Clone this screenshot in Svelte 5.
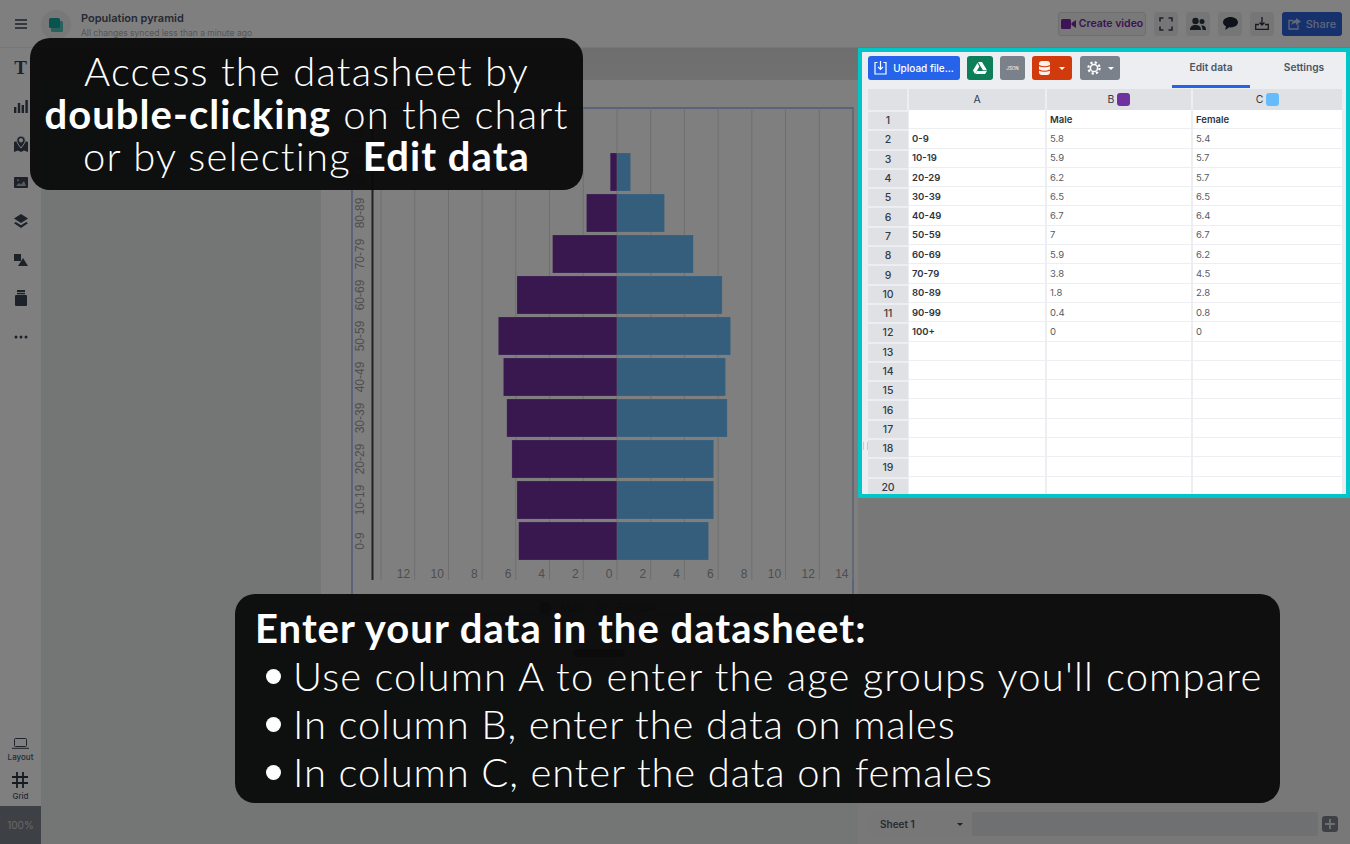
<script lang="ts">
  const ages = ['0-9', '10-19', '20-29', '30-39', '40-49', '50-59', '60-69', '70-79', '80-89', '90-99', '100+'];
  const male = [5.8, 5.9, 6.2, 6.5, 6.7, 7, 5.9, 3.8, 1.8, 0.4, 0];
  const female = [5.4, 5.7, 5.7, 6.5, 6.4, 6.7, 6.2, 4.5, 2.8, 0.8, 0];

  const rows = $derived.by(() => {
    const out: { a: string; b: string; c: string; head?: boolean }[] = [{ a: '', b: 'Male', c: 'Female', head: true }];
    ages.forEach((a, i) => out.push({ a, b: String(male[i]), c: String(female[i]) }));
    while (out.length < 20) out.push({ a: '', b: '', c: '' });
    return out;
  });

  const zero = 617;
  const unit = 16.95;
  const step = 33.72;
  const leftTicks = [0, 2, 4, 6, 8, 10, 12];
  const rightTicks = [2, 4, 6, 8, 10, 12, 14];
  const barY = (i: number) => 522 - i * 41;
</script>

<div class="app">
  <header class="topbar">
    <button class="ham" aria-label="Menu">
      <svg width="12" height="10" viewBox="0 0 12 10"><path d="M0 1h12M0 5h12M0 9h12" stroke="#3b4352" stroke-width="1.700" /></svg>
    </button>
    <div class="logo">
      <svg width="16" height="16" viewBox="0 0 16 16"><rect x="3" y="4" width="12" height="11" rx="1.5" fill="#4fc4bb" /><rect x="1" y="1" width="11" height="10" rx="1.5" fill="#12a89d" /></svg>
    </div>
    <div class="doc">
      <div class="doc-title">Population pyramid</div>
      <div class="doc-sub">All changes synced less than a minute ago</div>
    </div>
    <div class="top-actions">
      <button class="video">
        <svg width="15" height="10" viewBox="0 0 15 10"><rect width="10" height="10" rx="1.5" fill="#7a2aa8" /><path d="M10.5 4 15 1v8l-4.5-3z" fill="#7a2aa8" /></svg>
        Create video
      </button>
      <button class="square" aria-label="Fullscreen">
        <svg width="14" height="14" viewBox="0 0 14 14" fill="none" stroke="#3b4352" stroke-width="1.6"><path d="M1 4.500V1h3.500M9.500 1H13v3.500M13 9.500V13H9.500M4.500 13H1V9.500" /></svg>
      </button>
      <button class="square" aria-label="Team">
        <svg width="16" height="14" viewBox="0 0 16 14" fill="#2b3240"><circle cx="5.500" cy="4" r="3.200" /><path d="M0 13c0-3.500 2-5 5.500-5s5.500 1.500 5.500 5z" /><circle cx="12" cy="4.500" r="2.500" /><path d="M12 8.500c2.500 0 4 1 4 4.500h-3.500c0-2-.5-3.200-1.500-4.300z" /></svg>
      </button>
      <button class="square" aria-label="Comments">
        <svg width="15" height="13" viewBox="0 0 15 13" fill="#1f2633"><path d="M7.500 0C3.400 0 0 2.300 0 5.200c0 1.700 1.100 3.200 2.900 4.100L2.300 13l3.900-2.700c.4.100.9.100 1.300.1 4.100 0 7.500-2.300 7.500-5.200S11.600 0 7.500 0z" /></svg>
      </button>
      <button class="square" aria-label="Download">
        <svg width="14" height="13" viewBox="0 0 14 13" fill="none" stroke="#2b3240" stroke-width="1.300"><path d="M7 0v8M4.500 5.500 7 8l2.500-2.500M4 7.500H.7v4.800h12.600V7.500H10" /></svg>
      </button>
      <button class="share">
        <svg width="14" height="13" viewBox="0 0 14 13" fill="none" stroke="#bcd0f5" stroke-width="1.300"><path d="M10 7.500V12H1V3.500h4" /><path d="M8 1l5 3.500L8 8V6C5.500 6 4 7 3.500 8.500 3.500 5 5 3 8 3z" fill="#bcd0f5" stroke="none" /></svg>
        Share
      </button>
    </div>
  </header>

  <div class="body">
    <nav class="rail">
      <div class="tool"><span class="t-glyph">T</span></div>
      <div class="tool"><svg width="14" height="14" viewBox="0 0 14 14" fill="#3b4352"><rect y="8" width="2.400" height="6" /><rect x="3.800" y="4" width="2.400" height="10" /><rect x="7.600" y="6" width="2.400" height="8" /><rect x="11.400" y="1" width="2.400" height="13" /></svg></div>
      <div class="tool"><svg width="14" height="16" viewBox="0 0 14 16" fill="#3b4352"><path d="M0 6l3-1 4 6 4-6 3 1v10l-4-1.500L7 16l-3-1.500L0 16z" /><path fill-rule="evenodd" stroke="#fff" stroke-width="1" d="M7 0a4.300 4.300 0 0 0-4.300 4.300C2.700 6.500 5 9.500 7 12c2-2.500 4.300-5.500 4.300-7.700A4.300 4.300 0 0 0 7 0zm0 2.600a1.700 1.700 0 1 1 0 3.400 1.700 1.700 0 0 1 0-3.400z" /></svg></div>
      <div class="tool"><svg width="14" height="11" viewBox="0 0 14 11"><rect width="14" height="11" rx="1" fill="#3b4352" /><path d="M2 9l3-3 2 1.500L10 4l2 5z" fill="#b5b5b5" /><circle cx="4" cy="3.200" r="1" fill="#b5b5b5" /></svg></div>
      <div class="tool"><svg width="14" height="14" viewBox="0 0 14 14" fill="#3b4352"><path d="M7 0l7 4.500L7 9 0 4.500z" /><path d="M1.800 8L7 11.300 12.200 8 14 9.300 7 14 0 9.300z" /></svg></div>
      <div class="tool"><svg width="14" height="12" viewBox="0 0 14 12" fill="#3b4352"><rect width="7" height="7" /><path d="M9 4l5 8H4z" /></svg></div>
      <div class="tool"><svg width="12" height="16" viewBox="0 0 12 16" fill="#3b4352"><rect x="2" width="8" height="2" /><rect x="2" y="2.800" width="8" height="1.500" /><rect y="5" width="12" height="11" rx="1" /></svg></div>
      <div class="tool"><svg width="14" height="4" viewBox="0 0 14 4" fill="#3b4352"><circle cx="2" cy="2" r="1.500" /><circle cx="7" cy="2" r="1.500" /><circle cx="12" cy="2" r="1.500" /></svg></div>
      <div class="rail-foot">
        <div class="mini">
          <svg width="17" height="11" viewBox="0 0 17 11" fill="none" stroke="#3b4352" stroke-width="1"><rect x="2.500" y=".5" width="12" height="8" rx="1" /><path d="M0 10.300h17" /></svg>
          <span>Layout</span>
        </div>
        <div class="mini">
          <svg width="16" height="16" viewBox="0 0 16 16" fill="none" stroke="#2b3240" stroke-width="1.800"><path d="M5 0v16M11 0v16M0 5h16M0 11h16" /></svg>
          <span>Grid</span>
        </div>
        <div class="zoom-box">100%</div>
      </div>
    </nav>

    <main class="canvas">
      <div class="canvas-bar"></div>
      <div class="canvas-row">
        <div class="gutter"></div>
        <div class="page">
          <svg class="chart" width="537" height="590" viewBox="321 80 537 590">
            <rect x="352" y="108" width="501" height="507" fill="none" stroke="#6a90f0" stroke-width="1" />
            {#each [...leftTicks, 14] as t}
              <line x1={zero - (t * step) / 2} x2={zero - (t * step) / 2} y1="108" y2="580" stroke="#dcdcdc" stroke-width="1" />
            {/each}
            {#each rightTicks as t}
              <line x1={zero + (t * step) / 2} x2={zero + (t * step) / 2} y1="108" y2="580" stroke="#dcdcdc" stroke-width="1" />
            {/each}
            <line x1="372.500" x2="372.500" y1="108" y2="580" stroke="#444" stroke-width="2" />
            {#each ages as age, i}
              <rect x={zero - male[i] * unit} y={barY(i)} width={male[i] * unit} height="38" fill="#70309f" stroke="#fff" stroke-opacity=".35" stroke-width=".6" />
              <rect x={zero} y={barY(i)} width={female[i] * unit} height="38" fill="#68bcf8" stroke="#fff" stroke-opacity=".35" stroke-width=".6" />
              <text class="tick" transform="translate(364 {barY(i) + 19}) rotate(-90)" text-anchor="middle">{age}</text>
            {/each}
            {#each leftTicks as t}
              <text class="tick" x={zero - (t * step) / 2 - 4.500} y="578" text-anchor="end">{t}</text>
            {/each}
            {#each rightTicks as t}
              <text class="tick" x={zero + (t * step) / 2 - 4.500} y="578" text-anchor="end">{t}</text>
            {/each}
            <circle cx="545" cy="608" r="6" fill="#70309f" />
            <text class="legend" x="560" y="612">Male</text>
            <circle cx="601" cy="608" r="6" fill="#68bcf8" />
            <text class="legend" x="616" y="612">Female</text>
            <rect x="573" y="649" width="52" height="8" rx="4" fill="#333" />
          </svg>
        </div>
      </div>
    </main>

    <aside class="side">
      <section class="sheet">
        <div class="grip" aria-hidden="true"></div>
        <div class="toolbar">
          <button class="tb upload">
            <svg width="13" height="14" viewBox="0 0 13 14" fill="none" stroke="#fff" stroke-width="1.200"><path d="M3.500 1.500H1v11.500h11V1.500H9.500M6.500 0v8M4 5.800l2.500 2.500L9 5.800" /></svg>
            Upload file...
          </button>
          <button class="tb drive" aria-label="Google Drive">
            <svg width="14" height="12" viewBox="0 0 14 12" fill="#fff"><path d="M5 0h4l5 8.300h-4zM4.400 1 6.400 4.500 2 12 0 8.500zM4 9h10l-2 3H2.500z" /></svg>
          </button>
          <button class="tb json">JSON</button>
          <button class="tb db">
            <svg width="11" height="14" viewBox="0 0 11 14"><rect width="11" height="14" rx="3" fill="#fff0ea" /><path d="M0 4.500c3 1.500 8 1.500 11 0M0 9c3 1.500 8 1.500 11 0" stroke="#d13a0d" stroke-width="1.200" fill="none" /></svg>
            <i class="caret"></i>
          </button>
          <button class="tb gear" aria-label="Options">
            <svg width="14" height="14" viewBox="0 0 14 14" fill="none" stroke="#fff"><circle cx="7" cy="7" r="3.600" stroke-width="1.500" /><circle cx="7" cy="7" r="5.600" stroke-width="2.200" stroke-dasharray="2.200 2.200" /></svg>
            <i class="caret"></i>
          </button>
          <div class="tabs">
            <div class="tab on">Edit data</div>
            <div class="tab">Settings</div>
          </div>
        </div>

        <div class="grid">
          <div class="hd"></div>
          <div class="hd">A</div>
          <div class="hd">B <i class="swatch purple"></i></div>
          <div class="hd">C <i class="swatch blue"></i></div>
          {#each rows as r, i}
            <div class="num">{i + 1}</div>
            <div class="cell age">{r.a}</div>
            <div class="cell" class:bold={r.head}>{r.b}</div>
            <div class="cell" class:bold={r.head}>{r.c}</div>
          {/each}
        </div>
      </section>

      <div class="sheet-tabs">
        <div class="sheet-bar">
          <div class="sheet-name">Sheet 1 <i class="caret dark"></i></div>
        </div>
        <button class="add" aria-label="Add sheet">
          <svg width="10" height="10" viewBox="0 0 10 10"><path d="M5 0v10M0 5h10" stroke="#ddd" stroke-width="2" /></svg>
        </button>
      </div>
    </aside>
  </div>

  <div class="overlay"></div>

  <div class="note note-top">
    Access the datasheet by<br />
    <strong>double-clicking</strong> on the chart<br />
    or by selecting <strong>Edit data</strong>
  </div>

  <div class="note note-bottom">
    <strong class="note-title">Enter your data in the datasheet:</strong>
    <ul>
      <li>Use column A to enter the age groups you'll compare</li>
      <li>In column B, enter the data on males</li>
      <li>In column C, enter the data on females</li>
    </ul>
  </div>
</div>

<style>
  :global(body) { margin: 0; overflow: hidden; font-family: Inter, "Noto Sans", sans-serif; }
  button { font-family: inherit; border: 0; padding: 0; cursor: pointer; }

  .app { position: relative; width: 1350px; height: 844px; display: flex; flex-direction: column; overflow: hidden; background: #fff; }

  .topbar { height: 48px; flex: none; display: flex; align-items: center; background: #fff; border-bottom: 1px solid #eee; box-sizing: border-box; }
  .ham { width: 41px; height: 40px; background: none; display: flex; align-items: center; justify-content: center; }
  .logo { width: 30px; height: 30px; margin: 3px 10px 0 0; border-radius: 50%; background: #f0f0f0; display: flex; align-items: center; justify-content: center; }
  .doc { margin-top: 3px; }
  .doc-title { font-size: 11px; font-weight: 600; color: #4b5568; line-height: 14px; }
  .doc-sub { font-size: 8.500px; color: #a9adb3; line-height: 14px; margin-top: 1px; }
  .top-actions { margin-left: auto; margin-right: 8px; display: flex; gap: 8px; align-items: center; }
  .video { height: 24px; width: 88px; border: 1px solid #ddd; border-radius: 3px; background: #f2f2f2; color: #7a2aa8; font-size: 10.500px; font-weight: 600; display: flex; align-items: center; justify-content: center; gap: 3px; box-sizing: border-box; white-space: nowrap; }
  .square { width: 24px; height: 24px; background: #ececec; border-radius: 3px; display: flex; align-items: center; justify-content: center; }
  .share { width: 60px; height: 24px; background: #2f62d8; color: #bcd0f5; border-radius: 3px; font-size: 11px; font-weight: 500; display: flex; align-items: center; justify-content: center; gap: 4px; }

  .body { flex: 1; display: flex; min-height: 0; }

  .rail { width: 41px; flex: none; background: #fff; display: flex; flex-direction: column; align-items: center; }
  .tool { height: 38.500px; width: 100%; display: flex; align-items: center; justify-content: center; flex: none; }
  .t-glyph { font-family: "Liberation Serif", serif; font-weight: 700; font-size: 19px; color: #3b4352; line-height: 1; }
  .rail-foot { margin-top: auto; width: 100%; display: flex; flex-direction: column; align-items: center; }
  .mini { height: 39px; display: flex; flex-direction: column; align-items: center; justify-content: flex-end; color: #4b5568; font-size: 8px; font-weight: 500; gap: 3px; padding-bottom: 2px; box-sizing: border-box; }
  .zoom-box { width: 100%; height: 38px; margin-top: 3px; background: #7b818b; color: #d2d2d2; font-size: 10px; display: flex; align-items: center; justify-content: center; }

  .canvas { flex: 1; min-width: 0; background: #e9eaeb; display: flex; flex-direction: column; }
  .canvas-bar { height: 32px; flex: none; background: linear-gradient(#dcdddc, #e2e2e2); }
  .canvas-row { display: flex; }
  .gutter { width: 280px; flex: none; }
  .page { flex: 1; background: #fff; height: 590px; }
  .chart { display: block; }
  .tick { font-family: "Liberation Sans", sans-serif; font-size: 12px; fill: #9c9c9c; }
  .legend { font-family: "Liberation Sans", sans-serif; font-size: 12px; fill: #666; }

  .side { width: 492px; flex: none; background: #f0f0f1; display: flex; flex-direction: column; }
  .sheet { position: relative; z-index: 3; height: 450px; box-sizing: border-box; border: 4px solid #00c7c7; background: #eceef1; padding: 4px 4px 0 6px; overflow: hidden; }
  .grip { position: absolute; left: 1px; top: 390px; width: 3px; height: 8px; border: solid #c4c7cc; border-width: 0 1px; }

  .toolbar { display: flex; align-items: flex-start; height: 33px; }
  .tb { height: 24px; border-radius: 3px; display: flex; align-items: center; justify-content: center; color: #fff; flex: none; }
  .upload { width: 92px; background: #2563eb; font-size: 10px; font-weight: 500; gap: 6px; white-space: nowrap; }
  .drive { width: 26px; margin-left: 7px; background: #0d7f58; }
  .json { width: 25px; margin-left: 7px; background: #7b818b; font-size: 4.500px; }
  .db { width: 40px; margin-left: 7px; background: #d13a0d; gap: 9px; }
  .gear { width: 40px; margin-left: 8px; background: #7b818b; gap: 7px; }
  .caret { width: 0; height: 0; border: solid transparent; border-width: 3px 3px 0; border-top-color: #fff; }
  .caret.dark { border-top-color: #444; }

  .tabs { margin-left: auto; display: flex; }
  .tab { width: 78px; height: 32px; box-sizing: border-box; padding-top: 3px; margin-right: 15px; font-size: 10.200px; font-weight: 600; line-height: 16px; text-align: center; color: #4b5563; }
  .tab:last-child { margin-right: -1px; }
  .tab.on { border-bottom: 3.500px solid #2563eb; }

  .grid { display: grid; grid-template-columns: 41px 138px 146px 149px; grid-template-rows: 21px; grid-auto-rows: 19.300px; width: 474px; }
  .hd { background: #dfe1e5; border-right: 2px solid #eceef1; box-sizing: border-box; font-size: 10.500px; color: #333a45; display: flex; align-items: center; justify-content: center; gap: 3px; }
  .hd:nth-child(4) { border-right: 0; }
  .num { background: #dfe1e5; border: solid #eceef1; border-width: 2px 1px 0 0; box-sizing: border-box; font-size: 10.500px; font-weight: 500; color: #333a45; display: flex; align-items: center; justify-content: center; }
  .cell { background: #fff; border: solid #eceef1; border-width: 0 2px 1.500px 0; box-sizing: border-box; padding-left: 3px; font-size: 9.500px; color: #555b68; display: flex; align-items: center; white-space: nowrap; }
  .cell:nth-child(4n + 4) { border-right: 0; }
  .age, .bold { font-weight: 600; color: #2e3440; }
  .swatch { width: 13px; height: 13px; border-radius: 3px; display: inline-block; }
  .purple { background: #7030a0; }
  .blue { background: #66bbfb; }

  .sheet-tabs { margin-top: auto; margin-bottom: 8px; display: flex; padding-left: 10px; height: 24px; align-items: center; }
  .sheet-bar { width: 450px; height: 24px; background: #dfe0e2; border-radius: 2px; }
  .sheet-name { width: 104px; height: 24px; box-sizing: border-box; padding: 0 9px 0 12px; background: #eeeeef; display: flex; align-items: center; justify-content: space-between; font-size: 10px; font-weight: 600; color: #4b5563; }
  .add { width: 16px; height: 16px; margin-left: 4px; background: #7b818b; border-radius: 3px; display: flex; align-items: center; justify-content: center; }

  .overlay { position: absolute; inset: 0; z-index: 2; background: rgba(0, 0, 0, 0.5); }

  .note { position: absolute; z-index: 4; box-sizing: border-box; background: rgba(10, 10, 10, 0.96); border-radius: 20px; color: #fff; font-family: Lato, "Open Sans", sans-serif; font-weight: 300; font-size: 40px; white-space: nowrap; }
  .note strong { font-weight: 700; }
  .note-top { left: 30px; top: 38px; width: 553px; height: 152px; text-align: center; line-height: 42.500px; padding-top: 12px; letter-spacing: 1.220px; }
  .note-top strong { letter-spacing: 1.050px; }
  .note-bottom { left: 235px; top: 594px; width: 1045px; height: 209px; padding: 10px 0 0 20px; letter-spacing: 1.170px; }
  .note-title { display: block; line-height: 48px; letter-spacing: 1.020px; }
  ul { margin: 0; padding: 0 0 0 38px; list-style: none; }
  li { position: relative; line-height: 48px; }
  li:nth-child(n + 2) { letter-spacing: 0.860px; }
  li::before { content: ""; position: absolute; left: -27px; top: 17px; width: 15px; height: 15px; border-radius: 50%; background: #fff; }
</style>
